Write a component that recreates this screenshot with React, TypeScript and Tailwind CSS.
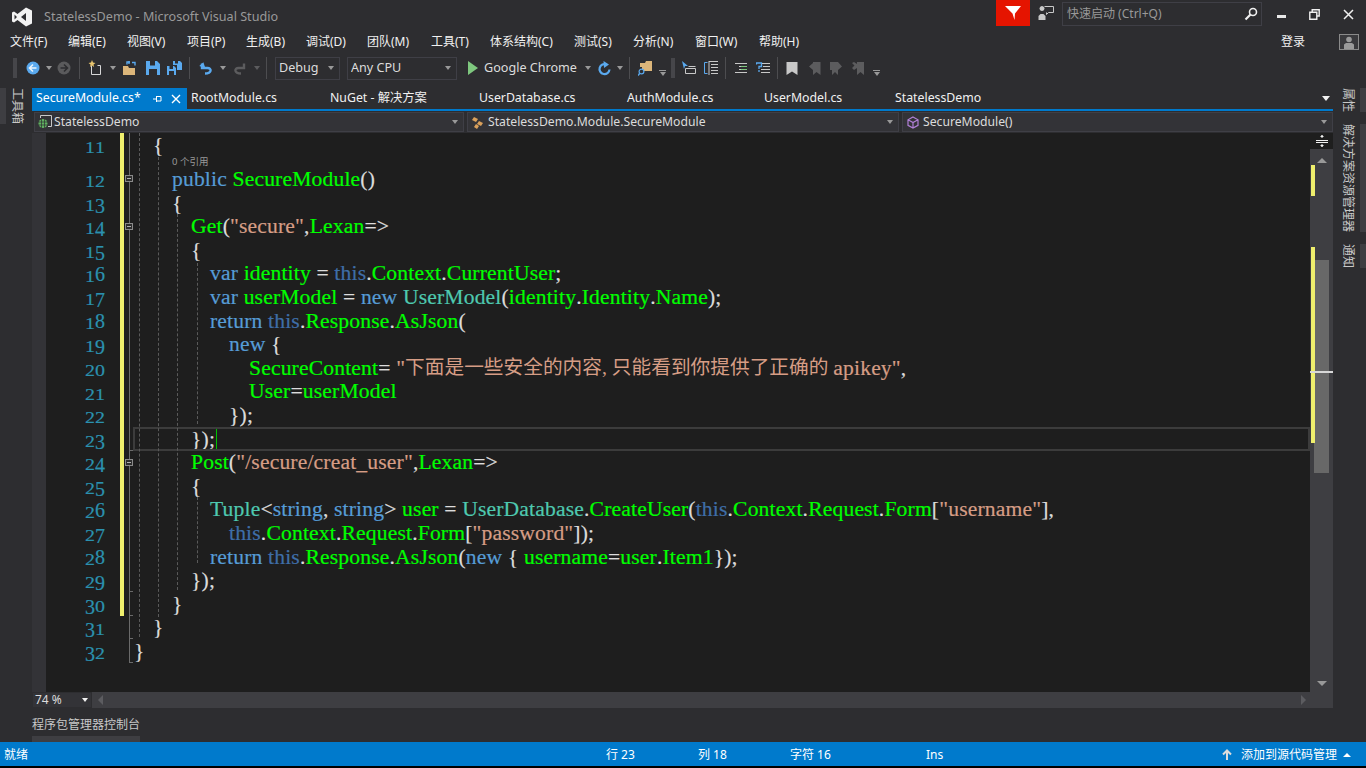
import type { ReactNode } from "react";

const ui = "[font-family:'Noto_Sans','Noto_Sans_CJK_SC',sans-serif]";
const code = "[font-family:'Liberation_Serif','Noto_Sans_CJK_SC',serif]";

const colors = {
  k: "text-[#569cd6]",
  h: "text-[#3f6ea8]",
  g: "text-[#00ff00]",
  s: "text-[#d69d85]",
  t: "text-[#4ec9b0]",
  p: "text-[#dcdcdc]",
  c: "text-[#d69d85] text-[19.7px] tracking-normal [-webkit-text-stroke:0px]",
};
type Tok = [keyof typeof colors, string];

const indents = ["pl-[1px]", "pl-[20px]", "pl-[39px]", "pl-[58px]", "pl-[77px]", "pl-[96px]", "pl-[116px]"];

interface Line {
  n: number;
  i: number;
  toks: Tok[];
  fold?: boolean;
  tick?: boolean;
  nochange?: boolean;
}

const thisCtx: Tok[] = [["h", "this"], ["p", "."], ["g", "Context"], ["p", "."], ["g", "Request"], ["p", "."], ["g", "Form"]];
const thisResp: Tok[] = [["k", "return "], ["h", "this"], ["p", "."], ["g", "Response"], ["p", "."], ["g", "AsJson"]];

const lines: Line[] = [
  { n: 12, i: 2, fold: true, toks: [["k", "public "], ["g", "SecureModule"], ["p", "()"]] },
  { n: 13, i: 2, toks: [["p", "{"]] },
  { n: 14, i: 3, fold: true, toks: [["g", "Get"], ["p", "("], ["s", "\"secure\""], ["p", ","], ["g", "Lexan"], ["p", "=>"]] },
  { n: 15, i: 3, toks: [["p", "{"]] },
  { n: 16, i: 4, toks: [["k", "var "], ["g", "identity"], ["p", " = "], ["h", "this"], ["p", "."], ["g", "Context"], ["p", "."], ["g", "CurrentUser"], ["p", ";"]] },
  { n: 17, i: 4, toks: [["k", "var "], ["g", "userModel"], ["p", " = "], ["k", "new "], ["t", "UserModel"], ["p", "("], ["g", "identity"], ["p", "."], ["g", "Identity"], ["p", "."], ["g", "Name"], ["p", ");"]] },
  { n: 18, i: 4, toks: [...thisResp, ["p", "("]] },
  { n: 19, i: 5, toks: [["k", "new "], ["p", "{"]] },
  { n: 20, i: 6, toks: [["g", "SecureContent"], ["p", "= "], ["s", "\""], ["c", "下面是一些安全的内容, 只能看到你提供了正确的 "], ["s", "apikey\""], ["p", ","]] },
  { n: 21, i: 6, toks: [["g", "User"], ["p", "="], ["g", "userModel"]] },
  { n: 22, i: 5, toks: [["p", "});"]] },
  { n: 23, i: 3, tick: true, toks: [["p", "});"]] },
  { n: 24, i: 3, fold: true, toks: [["g", "Post"], ["p", "("], ["s", "\"/secure/creat_user\""], ["p", ","], ["g", "Lexan"], ["p", "=>"]] },
  { n: 25, i: 3, toks: [["p", "{"]] },
  { n: 26, i: 4, toks: [["t", "Tuple"], ["p", "<"], ["k", "string"], ["p", ", "], ["k", "string"], ["p", "> "], ["g", "user"], ["p", " = "], ["t", "UserDatabase"], ["p", "."], ["g", "CreateUser"], ["p", "("], ...thisCtx, ["p", "["], ["s", "\"username\""], ["p", "],"]] },
  { n: 27, i: 5, toks: [...thisCtx, ["p", "["], ["s", "\"password\""], ["p", "]);"]] },
  { n: 28, i: 4, toks: [...thisResp, ["p", "("], ["k", "new "], ["p", "{ "], ["g", "username"], ["p", "="], ["g", "user"], ["p", "."], ["g", "Item1"], ["p", "});"]] },
  { n: 29, i: 3, tick: true, toks: [["p", "});"]] },
  { n: 30, i: 2, tick: true, toks: [["p", "}"]] },
  { n: 31, i: 1, tick: true, nochange: true, toks: [["p", "}"]] },
  { n: 32, i: 0, tick: true, nochange: true, toks: [["p", "}"]] },
];

const digitClass: Record<string, string> = {
  "0": "scale-y-[.8] origin-bottom",
  "1": "scale-y-[.8] origin-bottom",
  "2": "scale-y-[.8] origin-bottom",
  "3": "translate-y-[3px]",
  "4": "translate-y-[3px]",
  "5": "translate-y-[3px]",
  "6": "",
  "7": "translate-y-[3px]",
  "8": "",
  "9": "translate-y-[3px]",
};

function LineNo({ n }: { n: number }) {
  return (
    <span className="flex w-[59px] shrink-0 justify-end text-[20px] leading-[20px] text-[#2b91af] [-webkit-text-stroke:0.2px]">
      {String(n).split("").map((d, i) => (
        <span key={i} className={`inline-block ${digitClass[d]}`}>{d}</span>
      ))}
    </span>
  );
}

const codeText = "text-[21.6px] tracking-[0.16px] [-webkit-text-stroke:0.2px]";

function Row({ line }: { line: Line }) {
  return (
    <div className="relative flex h-[23.6px] items-center">
      <LineNo n={line.n} />
      <div className="w-[15px] shrink-0" />
      <div className={`h-full w-[4px] shrink-0 ${line.nochange ? "" : "bg-[#efef6d]"}`} />
      <div className="relative h-full w-[9px] shrink-0">
        <div className="absolute bottom-0 left-[5px] top-0 w-px bg-[#6a6a6a]" />
        {line.tick && <div className="absolute bottom-0 left-[5px] h-px w-[4px] bg-[#6a6a6a]" />}
        {line.fold && (
          <div className="absolute left-[1px] top-[8px] flex h-[7px] w-[8px] items-center justify-center border border-[#8a8a8a] bg-[#2d2d2d]">
            <div className="h-px w-[4px] bg-[#b0b0b0]" />
          </div>
        )}
      </div>
      <div className={`relative flex h-full min-w-0 flex-1 items-center whitespace-pre ${codeText} ${indents[line.i]}`}>
        {line.toks.map((t, i) => (
          <span key={i} className={colors[t[0]]}>{t[1]}</span>
        ))}
        {line.n === 23 && (
          <>
            <span className="ml-[1px] h-[22px] w-px bg-[#00c000]" />
            <div className="absolute inset-0 border-2 border-[#3c3c3c]" />
          </>
        )}
      </div>
    </div>
  );
}

const Arrow = ({ className = "", color = "border-t-[#999999]" }: { className?: string; color?: string }) => (
  <span className={`h-0 w-0 shrink-0 border-x-[3.5px] border-t-[4px] border-x-transparent ${color} ${className}`} />
);

const Sep = ({ className = "" }: { className?: string }) => (
  <span className={`h-[22px] w-px shrink-0 bg-[#4d4d50] ${className}`} />
);

const Grip = ({ className = "" }: { className?: string }) => (
  <span className={`h-[20px] w-[4px] shrink-0 bg-[radial-gradient(#46464a_1px,transparent_1px)] bg-[length:2px_3px] ${className}`} />
);

function Ico({ w = 16, h = 16, className = "", children }: { w?: number; h?: number; className?: string; children: ReactNode }) {
  return (
    <svg width={w} height={h} viewBox={`0 0 ${w} ${h}`} className={`shrink-0 ${className}`}>
      {children}
    </svg>
  );
}

function CircleArrow({ back, on, className }: { back: boolean; on: boolean; className: string }) {
  const bg = on ? "#5aa9ee" : "#5a5a5c";
  const fg = on ? "#e8f3fc" : "#2d2d30";
  return (
    <Ico w={14} h={14} className={className}>
      <circle cx="7" cy="7" r="6.5" fill={bg} />
      <path d={back ? "M7 3.5 3.5 7 7 10.5M4 7h6.5" : "M7 3.5 10.5 7 7 10.5M10 7H3.5"} fill="none" stroke={fg} strokeWidth="1.6" />
    </Ico>
  );
}

function Combo({ label, className, icon, arrow = "border-t-[#999999]" }: { label: string; className: string; icon?: ReactNode; arrow?: string }) {
  return (
    <div className={`flex h-[20px] items-center border border-[#3f3f46] bg-[#333337] pl-[2px] pr-[5px] text-[12.2px] text-[#dcdcdc] ${className}`}>
      {icon}
      <span className="flex-1 truncate">{label}</span>
      <Arrow color={arrow} />
    </div>
  );
}

const menus: [string, string][] = [
  ["文件(F)", "w-[58px]"], ["编辑(E)", "w-[59px]"], ["视图(V)", "w-[60px]"], ["项目(P)", "w-[59px]"],
  ["生成(B)", "w-[60px]"], ["调试(D)", "w-[61px]"], ["团队(M)", "w-[64px]"], ["工具(T)", "w-[59px]"],
  ["体系结构(C)", "w-[84px]"], ["测试(S)", "w-[59px]"], ["分析(N)", "w-[62px]"], ["窗口(W)", "w-[64px]"], ["帮助(H)", "w-[60px]"],
];

const tabs: [string, string][] = [
  ["RootModule.cs", "w-[139px]"], ["NuGet - 解决方案", "w-[149px]"], ["UserDatabase.cs", "w-[148px]"],
  ["AuthModule.cs", "w-[137px]"], ["UserModel.cs", "w-[131px]"], ["StatelessDemo", "w-[140px]"],
];

const guides = [
  "left-[92.5px] top-0 h-[504px]",
  "left-[111.5px] top-[24px] h-[460px]",
  "left-[130.5px] top-[81px] h-[376px]",
  "left-[151px] top-[130px] h-[161px]",
  "left-[151px] top-[364px] h-[66px]",
];

const sideways = "[writing-mode:vertical-rl] [text-orientation:sideways]";

export default function App() {
  return (
    <div className={`flex h-[768px] w-[1366px] flex-col overflow-hidden bg-[#2d2d30] ${ui}`}>
      {/* title bar */}
      <div className="flex h-[30px] shrink-0 items-start">
        <Ico w={20} h={20} className="ml-[12px] mt-[7px]">
          <path fillRule="evenodd" fill="#f2f2f2" d="M14 0.5 20 3.5V16.5L14 19.5 5.5 13 2 15.5 0 14.5V5.5L2 4.5 5.5 7ZM14 6 9 10 14 14ZM2.5 7.5V12.5L5 10Z" />
        </Ico>
        <span className="ml-[12px] mt-[8px] text-[12.6px] leading-[18px] text-[#999999]">StatelessDemo - Microsoft Visual Studio</span>
        <div className="ml-auto flex h-[26px] w-[34px] items-center justify-center bg-[#e51400]">
          <Ico w={18} h={16}>
            <path fill="#ffffff" d="M1 1H17L11 8.5 10.5 15 8.5 8.5Z" />
          </Ico>
        </div>
        <Ico w={16} h={16} className="ml-[8px] mt-[5px]">
          <path fill="#c8c8c8" d="M2 5a2.5 2.5 0 1 1 4 0 2.5 2.5 0 0 1-4 0ZM0.5 15v-4l2-2h3l2 2v4Z" />
          <path fill="none" stroke="#c8c8c8" d="M6.5 1.5h9v6h-5l-2 2v-2" />
        </Ico>
        <div className="ml-[8px] mt-[2px] flex h-[24px] w-[200px] items-center border border-[#3f3f46] bg-[#2d2d30] pl-[4px] pr-[3px] text-[12px] text-[#999999]">
          <span className="flex-1">快速启动 (Ctrl+Q)</span>
          <Ico w={14} h={14}>
            <circle cx="9" cy="5" r="3.5" fill="none" stroke="#f0f0f0" strokeWidth="1.6" />
            <path d="M6.5 7.5 1.5 12.5" stroke="#f0f0f0" strokeWidth="2.2" />
          </Ico>
        </div>
        <div className="ml-[15px] mt-[15px] h-[3px] w-[9px] bg-[#e8e8e8]" />
        <Ico w={11} h={11} className="ml-[23px] mt-[9px]">
          <path fill="none" stroke="#f0f0f0" strokeWidth="1.4" d="M3.2 3V0.8H10.2V7H8M0.8 3.2H7.8V10.2H0.8Z" />
        </Ico>
        <Ico w={11} h={11} className="ml-[23px] mt-[9px] mr-[12px]">
          <path stroke="#f0f0f0" strokeWidth="1.5" d="M1 1 10 10M10 1 1 10" />
        </Ico>
      </div>

      {/* menu bar */}
      <div className="flex h-[24px] shrink-0 items-center pl-[10px] text-[12px] text-[#f1f1f1]">
        {menus.map(([label, w]) => (
          <span key={label} className={w}>{label}</span>
        ))}
        <span className="ml-auto">登录</span>
        <div className="ml-[34px] mr-[7px] flex h-[16px] w-[20px] items-center justify-center border border-[#8a8a8a] bg-[#3a3a3d]">
          <Ico w={12} h={13}>
            <circle cx="6" cy="3.5" r="2.8" fill="#9a9a9a" />
            <path fill="#9a9a9a" d="M1 13V8.5L3 7H9L11 8.5V13Z" />
          </Ico>
        </div>
      </div>

      {/* toolbar */}
      <div className="flex h-[28px] shrink-0 items-center text-[12.5px] text-[#dcdcdc]">
        <Grip className="ml-[13px]" />
        <CircleArrow back on className="ml-[9px]" />
        <Arrow className="ml-[6px]" />
        <CircleArrow back={false} on={false} className="ml-[5px]" />
        <Sep className="ml-[8px]" />
        <Ico w={15} h={16} className="ml-[8px]">
          <path fill="none" stroke="#d8d8d8" d="M3.5 5.5v9h9v-9h-3" />
          <path fill="#e8c56e" d="M4 0l1 2.5L7.5 3 5.5 4.5 6 7 4 5.5 2 7l.5-2.5L.5 3 3 2.5Z" />
        </Ico>
        <Arrow className="ml-[7px]" />
        <Ico w={15} h={14} className="ml-[7px]">
          <path fill="#dcb67a" d="M0 5h5l1 2h6v7H0Z" />
          <path fill="none" stroke="#5aa9ee" strokeWidth="1.4" d="M4 3.5V1h3M6 0v3M9 1.5h3v3" />
        </Ico>
        <Ico w={14} h={14} className="ml-[8px]">
          <path fill="#5aa9ee" fillRule="evenodd" d="M0 0H11L14 3V14H0ZM4 0V4.5H9V0ZM3 8V14H11V8Z" />
        </Ico>
        <Ico w={15} h={14} className="ml-[7px]">
          <path fill="#5aa9ee" fillRule="evenodd" d="M6 0H13L15 2V9H10V4H6ZM8 0V2.5H11V0ZM0 5H7L9 7V14H0ZM2.5 5V8H6V5ZM2 10V14H7V10Z" />
        </Ico>
        <Sep className="ml-[7px]" />
        <Ico w={14} h={14} className="ml-[9px]">
          <path fill="none" stroke="#5aa9ee" strokeWidth="2.4" d="M3 2.5V7H8.5C13 7 13 12.5 6 12.5" />
          <path fill="#5aa9ee" d="M0.5 6H7L3 1Z" transform="rotate(20 3 5)" />
        </Ico>
        <Arrow className="ml-[7px]" />
        <Ico w={14} h={14} className="ml-[7px]">
          <path fill="none" stroke="#5c5c5e" strokeWidth="2.4" d="M11 2.5V7H5.5C1 7 1 12.5 8 12.5" />
        </Ico>
        <Arrow className="ml-[7px]" color="border-t-[#5c5c5e]" />
        <Sep className="ml-[6px]" />
        <Combo label="Debug" className="ml-[8px] !h-[23px] w-[65px] !bg-[#2d2d30] !pl-[3px] !text-[12.6px]" />
        <Combo label="Any CPU" className="ml-[7px] !h-[23px] w-[110px] !bg-[#2d2d30] !pl-[3px] !text-[12.6px]" />
        <Ico w={12} h={14} className="ml-[10px]">
          <path fill="#7ec77e" d="M1 0 11 7 1 14Z" />
        </Ico>
        <span className="ml-[5px] w-[98px] text-[12.6px]">Google Chrome</span>
        <Arrow className="ml-[3px]" />
        <Ico w={14} h={15} className="ml-[6px]">
          <path fill="none" stroke="#5aa9ee" strokeWidth="2.2" d="M9.5 3.5A5 5 0 1 0 12.5 8.5" />
          <path fill="#5aa9ee" d="M6.5 0 12 3.5 7 7Z" />
        </Ico>
        <Arrow className="ml-[6px]" />
        <Sep className="ml-[6px]" />
        <Ico w={14} h={15} className="ml-[8px]">
          <path fill="#dcb67a" d="M2 2H7L8 0H14V10H4V6H2Z" />
          <circle cx="3.5" cy="10.5" r="2.4" fill="#2d2d30" stroke="#5aa9ee" strokeWidth="1.2" />
          <path stroke="#5aa9ee" strokeWidth="1.4" d="M1.8 12.2 0 14.5" />
        </Ico>
        <span className="ml-[7px] mt-[10px] flex flex-col items-center gap-[1px]">
          <span className="h-px w-[7px] bg-[#999999]" />
          <Arrow />
        </span>
        <Grip className="ml-[5px]" />
        <Ico w={14} h={14} className="ml-[7px]">
          <path fill="#5aa9ee" d="M0 0 6 5H3L2 8Z" />
          <path fill="none" stroke="#c8c8c8" d="M3.5 7.5h10v5h-10ZM6.5 5.5h7" />
        </Ico>
        <Ico w={15} h={14} className="ml-[7px]">
          <path fill="none" stroke="#5aa9ee" d="M4.5 1.5h-3v11h3" />
          <path stroke="#c8c8c8" d="M6 0.5h9M8 3.5h7M8 6.5h7M8 9.5h7M8 12.5h7M6 0v14" />
        </Ico>
        <Sep className="ml-[7px]" />
        <Ico w={13} h={12} className="ml-[8px]">
          <path stroke="#c8c8c8" d="M1 1.5h12M5 4.5h8M5 7.5h8M1 10.5h12" />
          <path stroke="#7ec77e" d="M7 4.5h6M7 7.5h6" />
        </Ico>
        <Ico w={14} h={13} className="ml-[9px]">
          <path fill="none" stroke="#5aa9ee" strokeWidth="1.3" d="M0.5 2.5V1H5.5V4.5H3V7M3 8v2" />
          <path stroke="#c8c8c8" d="M6 1.5h8M7 4.5h7M5 7.5h9M5 10.5h9" />
        </Ico>
        <Sep className="ml-[7px]" />
        <Ico w={12} h={13} className="ml-[8px]">
          <path fill="#c8c8c8" d="M0.5 0H11.5V13L6 9.5 0.5 13Z" />
        </Ico>
        <Ico w={12} h={13} className="ml-[11px]">
          <path fill="#5c5c5e" d="M4 0H11.5V13L7.5 10 4 13V8L0 4.5 4 1Z" />
        </Ico>
        <Ico w={12} h={13} className="ml-[9px]">
          <path fill="#5c5c5e" d="M0 0H8L12 4.5 8 8V13L5 10 2 13V8H0Z" />
        </Ico>
        <Ico w={12} h={13} className="ml-[10px]">
          <path fill="#5c5c5e" d="M0 1 2 0 5 2V0H12V13L8.5 10 5 13V6L2 8 0 6 2.5 3.5Z" />
        </Ico>
        <span className="ml-[9px] mt-[10px] flex flex-col items-center gap-[1px]">
          <span className="h-px w-[7px] bg-[#999999]" />
          <Arrow />
        </span>
      </div>

      {/* main */}
      <div className="flex min-h-0 flex-1 pt-[6px]">
        <div className="flex w-[32px] shrink-0 items-start">
          <div className="h-[36px] w-[6px] bg-[#3e3e42]" />
          <span className={`ml-[3px] text-[12px] leading-[16px] text-[#c8c8c8] ${sideways}`}>工具箱</span>
        </div>

        <div className="flex min-w-0 flex-1 flex-col">
          <div className="flex h-[21px] shrink-0 items-center text-[12.3px] text-[#f1f1f1]">
            <div className="flex h-full w-[155px] items-center bg-[#007acc] pl-[4px] text-white">
              <span className="flex-1">SecureModule.cs*</span>
              <Ico w={10} h={10}>
                <path stroke="#ffffff" fill="none" d="M0 5H3M3.5 2V8M3.5 2.5H8V7H3.5" />
              </Ico>
              <Ico w={10} h={10} className="ml-[8px] mr-[6px]">
                <path stroke="#ffffff" strokeWidth="1.4" d="M1 1 9 9M9 1 1 9" />
              </Ico>
            </div>
            {tabs.map(([label, w]) => (
              <span key={label} className={`pl-[4px] ${w}`}>{label}</span>
            ))}
            <Arrow className="ml-auto mr-[3px] !border-x-[4px] !border-t-[5px]" color="border-t-[#f1f1f1]" />
          </div>
          <div className="h-[2px] shrink-0 bg-[#007acc]" />

          <div className="flex h-[22px] shrink-0 gap-[3px] pl-[2px] pt-[1px]">
            <Combo
              label="StatelessDemo"
              className="w-[430px]"
              icon={
                <Ico w={15} h={14} className="mr-[2px]">
                  <path fill="none" stroke="#c8c8c8" d="M3.5 3V0.5H14.5V11.5H11" />
                  <circle cx="6" cy="8.5" r="4.5" fill="#60b060" />
                  <path stroke="#2d2d30" strokeWidth="0.7" d="M1.5 7h9M1.5 10h9M4.5 4v9M7.5 4v9" />
                </Ico>
              }
            />
            <Combo
              label="StatelessDemo.Module.SecureModule"
              className="w-[432px]"
              icon={
                <Ico w={14} h={13} className="ml-[1px] mr-[3px]">
                  <path fill="#d9a05b" d="M3 1 7 3 5 6 1 4ZM8 5 12 7 10 10 6 8ZM5 8 8 10 6 13 3 11Z" />
                </Ico>
              }
            />
            <Combo
              label="SecureModule()"
              className="w-[431px]"
              icon={
                <Ico w={14} h={13} className="ml-[1px] mr-[3px]">
                  <path fill="none" stroke="#b180d7" strokeWidth="1.2" d="M7 1 12 3.8V9.3L7 12 2 9.3V3.8ZM2 3.8 7 6.5 12 3.8M7 6.5V12" />
                </Ico>
              }
            />
          </div>

          {/* editor */}
          <div className="flex h-[559px] shrink-0">
            <div className="w-[14px] shrink-0 bg-[#333337]" />
            <div className="relative min-w-0 flex-1 overflow-hidden bg-[#1e1e1e] text-[#dcdcdc]">
              <div className={code}>
                <div className="relative flex h-[23.6px] items-center">
                  <LineNo n={11} />
                  <div className="w-[15px] shrink-0" />
                  <div className="h-full w-[4px] shrink-0 bg-[#efef6d]" />
                  <div className="relative h-full w-[9px] shrink-0">
                    <div className="absolute bottom-0 left-[5px] top-0 w-px bg-[#6a6a6a]" />
                  </div>
                  <div className={`flex-1 pl-[20px] text-[#dcdcdc] ${codeText}`}>{"{"}</div>
                </div>
                <div className="flex h-[10.8px] items-center">
                  <div className="w-[74px] shrink-0" />
                  <div className="h-full w-[4px] shrink-0 bg-[#efef6d]" />
                  <div className="relative h-full w-[9px] shrink-0">
                    <div className="absolute bottom-0 left-[5px] top-0 w-px bg-[#6a6a6a]" />
                  </div>
                  <span className={`pl-[39px] text-[9.5px] text-[#999999] ${ui}`}>0 个引用</span>
                </div>
                {lines.map((l) => (
                  <Row key={l.n} line={l} />
                ))}
              </div>
              {guides.map((g) => (
                <div key={g} className={`absolute w-0 border-l border-dashed border-[#5a5a5a] ${g}`} />
              ))}
            </div>
            <div className="relative w-[23px] shrink-0 bg-[#3e3e42]">
              <div className="flex h-[16px] flex-col items-center justify-center gap-[1px] bg-[#1e1e1e]">
                <Ico w={12} h={12}>
                  <path stroke="#f0f0f0" d="M0 5.5H12M0 7.5H12M6 0V3M6 9V12" />
                  <path fill="#f0f0f0" d="M4 2 6 0 8 2ZM4 10 6 12 8 10Z" />
                </Ico>
              </div>
              <span className="absolute left-[7px] top-[25px] h-0 w-0 border-x-[5px] border-b-[5px] border-x-transparent border-b-[#999999]" />
              <span className="absolute left-[7px] top-[548px] h-0 w-0 border-x-[5px] border-t-[5px] border-x-transparent border-t-[#999999]" />
              <div className="absolute left-[4px] top-[127px] h-[213px] w-[15px] bg-[#686868]" />
              <div className="absolute left-[1px] top-[32px] h-[31px] w-[4px] bg-[#efef6d]" />
              <div className="absolute left-[1px] top-[114px] h-[196px] w-[4px] bg-[#efef6d]" />
              <div className="absolute left-0 top-[238px] h-[2px] w-full bg-[#d8d8d8]" />
            </div>
          </div>

          {/* horizontal scrollbar */}
          <div className="flex h-[16px] shrink-0 items-center bg-[#3e3e42]">
            <div className="flex h-full w-[60px] items-center border border-[#2d2d30] bg-[#333337] pl-[2px] pr-[3px] text-[12px] text-[#dcdcdc]">
              <span className="flex-1">74 %</span>
              <Arrow color="border-t-[#f1f1f1]" />
            </div>
            <span className="ml-[6px] h-0 w-0 border-y-[5px] border-r-[5px] border-y-transparent border-r-[#5c5c60]" />
            <span className="ml-auto mr-[27px] h-0 w-0 border-y-[5px] border-l-[5px] border-y-transparent border-l-[#5c5c60]" />
          </div>

          {/* bottom tool panel */}
          <div className="flex h-[34px] shrink-0 flex-col justify-end">
            <span className="mb-[2px] text-[12px] leading-[18px] text-[#c8c8c8]">程序包管理器控制台</span>
            <div className="h-[6px] w-[108px] bg-[#3e3e42]" />
          </div>
        </div>

        <div className="flex w-[33px] shrink-0 flex-col gap-[12px]">
          {[
            ["属性", "h-[24px]"],
            ["解决方案资源管理器", "h-[108px]"],
            ["通知", "h-[24px]"],
          ].map(([label, h]) => (
            <div key={label} className={`flex justify-between pl-[7px] ${h}`}>
              <span className={`text-[12px] leading-[16px] text-[#c8c8c8] ${sideways}`}>{label}</span>
              <div className="h-full w-[6px] bg-[#3e3e42]" />
            </div>
          ))}
        </div>
      </div>

      {/* status bar */}
      <div className="flex h-[24px] shrink-0 items-center bg-[#007acc] pl-[4px] pt-[1px] text-[12px] text-white">
        <span className="w-[602px]">就绪</span>
        <span className="w-[92px]">行 23</span>
        <span className="w-[92px]">列 18</span>
        <span className="w-[136px]">字符 16</span>
        <span>Ins</span>
        <Ico w={10} h={11} className="ml-auto">
          <path fill="none" stroke="#dcdcdc" strokeWidth="2" d="M5 11V2M1 5.5 5 1.5 9 5.5" />
        </Ico>
        <span className="ml-[9px]">添加到源代码管理</span>
        <span className="ml-[6px] mr-[15px] h-0 w-0 border-x-[4px] border-b-[4px] border-x-transparent border-b-white" />
      </div>
      <div className="h-[2px] shrink-0 bg-black" />
    </div>
  );
}
